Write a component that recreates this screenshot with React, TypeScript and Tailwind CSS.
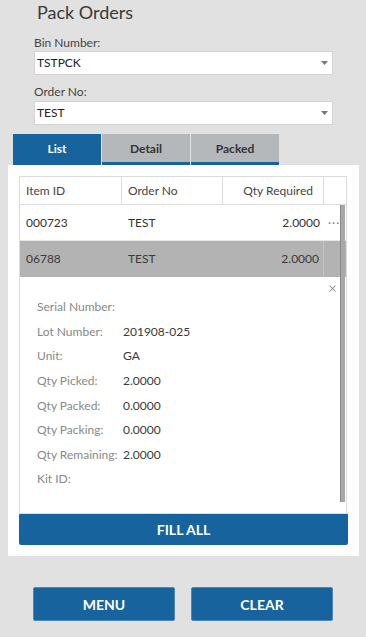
import { X } from 'lucide-react';

const DETAILS: ReadonlyArray<[string, string]> = [
  ['Serial Number:', ''],
  ['Lot Number:', '201908-025'],
  ['Unit:', 'GA'],
  ['Qty Picked:', '2.0000'],
  ['Qty Packed:', '0.0000'],
  ['Qty Packing:', '0.0000'],
  ['Qty Remaining:', '2.0000'],
  ['Kit ID:', ''],
];

function Caret() {
  return (
    <svg width="7" height="4" viewBox="0 0 7 4" className="shrink-0">
      <path d="M0 0h7L3.5 4z" fill="#777" />
    </svg>
  );
}

function SelectBox({ value }: { value: string }) {
  return (
    <div className="flex items-center h-[24px] w-[299px] pl-[2px] pr-[4px] bg-white border border-[#d4d4d4] text-[12px] text-[#222]">
      <span className="flex-1">{value}</span>
      <Caret />
    </div>
  );
}

export default function App() {
  return (
    <div className="w-[366px] h-[637px] bg-[#e1e1e1] overflow-hidden font-['Lato','Noto_Sans',sans-serif] text-[#333]">
      <div className="pl-[37px] h-[24px] text-[18px] leading-[24px] text-[#3a3a3a]">Pack Orders</div>

      <div className="pl-[34px] pt-[11px]">
        <div className="h-[16px] text-[12px] leading-[16px] text-[#444]">Bin Number:</div>
        <SelectBox value="TSTPCK" />
        <div className="mt-[9px] h-[17px] text-[12px] leading-[16px] text-[#444]">Order No:</div>
        <SelectBox value="TEST" />
      </div>

      <div className="flex gap-[1px] ml-[13px] mt-[9px] h-[31px] text-[12px] font-bold">
        <div className="w-[88px] flex items-start justify-center pt-[6px] bg-[#17639e] text-white">List</div>
        <div className="w-[88px] flex items-start justify-center pt-[6px] bg-[#b5b8bb] text-[#333] border-b-[3px] border-[#17639e]">Detail</div>
        <div className="w-[88px] flex items-start justify-center pt-[6px] bg-[#b5b8bb] text-[#333] border-b-[3px] border-[#17639e]">Packed</div>
      </div>

      <div className="ml-[8px] w-[351px] h-[391px] bg-white pl-[11px] pt-[11px]">
        <div className="relative w-[328px] border border-[#dcdcdc] text-[12px]">
          <div className="flex h-[28px] border-b border-[#dcdcdc] text-[#444]">
            <div className="w-[102px] pl-[6px] flex items-center border-r border-[#dcdcdc]">Item ID</div>
            <div className="w-[101px] pl-[6px] flex items-center border-r border-[#dcdcdc]">Order No</div>
            <div className="w-[101px] pr-[10px] flex items-center justify-end border-r border-[#dcdcdc]">Qty Required</div>
            <div className="flex-1" />
          </div>
          <div className="flex h-[36px] border-b border-[#e6e6e6]">
            <div className="w-[102px] pl-[6px] flex items-center">000723</div>
            <div className="w-[101px] pl-[6px] flex items-center">TEST</div>
            <div className="w-[101px] pr-[4px] flex items-center justify-end">2.0000</div>
            <div className="flex-1 flex items-center pl-[4px] text-[#888] tracking-[1px]">···</div>
          </div>
          <div className="flex h-[36px] bg-[#b3b3b3] text-[#3a3a3a]">
            <div className="w-[102px] pl-[6px] flex items-center">06788</div>
            <div className="w-[101px] pl-[6px] flex items-center">TEST</div>
            <div className="w-[101px] pr-[4px] flex items-center justify-end border-r border-[#c4c4c4]">2.0000</div>
            <div className="flex-1" />
          </div>
          <div className="relative h-[236px] pl-[17px] pt-[18px]">
            <X className="absolute right-[8px] top-[6px] text-[#888]" size={11} strokeWidth={2.2} />
            {DETAILS.map(([label, value]) => (
              <div key={label} className="flex h-[24.6px] items-center">
                <div className="w-[86px] text-[#888]">{label}</div>
                <div className="text-[#3a3a3a]">{value}</div>
              </div>
            ))}
          </div>
          <div className="absolute left-[320px] top-[28px] w-[5px] h-[297px] bg-[#a8a8a8] border-l border-[#888]" />
        </div>
        <button
          type="button"
          className="w-[329px] h-[32px] -mt-[1px] rounded-[2px] bg-[#17639e] text-white text-[14px] font-bold"
        >
          FILL ALL
        </button>
      </div>

      <div className="flex gap-[16px] pl-[33px] mt-[31px]">
        <button type="button" className="w-[142px] h-[34px] rounded-[2px] bg-[#17639e] text-white text-[14px] font-bold border border-[#4d87b8]">
          MENU
        </button>
        <button type="button" className="w-[142px] h-[34px] rounded-[2px] bg-[#17639e] text-white text-[14px] font-bold border border-[#4d87b8]">
          CLEAR
        </button>
      </div>
    </div>
  );
}
